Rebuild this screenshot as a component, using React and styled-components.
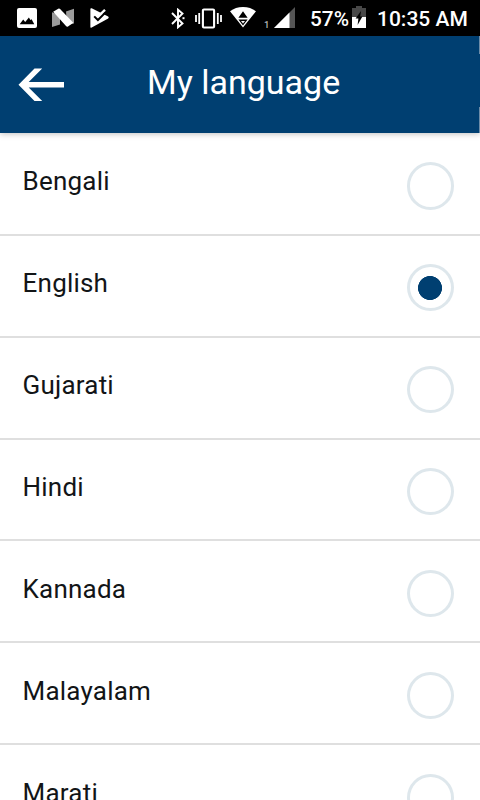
import React, { useState } from "react";
import styled, { createGlobalStyle } from "styled-components";

const languages = ["Bengali", "English", "Gujarati", "Hindi", "Kannada", "Malayalam", "Marati"];

const PictureIcon = () => (
    <Icon width="20" height="20" viewBox="0 0 20 20">
        <rect width="20" height="20" rx="2" fill="#fff" />
        <path d="M2.7 16.2 6.2 11.6 8.2 14 11.9 9.6 13.4 12 14.6 11.3 17.3 16.2Z" fill="#000" />
    </Icon>
);

const NougatIcon = () => (
    <Icon width="22" height="20" viewBox="0 0 22 20" $left={15}>
        <path d="M0 4.2 8 7V16.5L0 19Z" fill="#9b9b9b" />
        <path d="M14 3.6 22 .8V15.6L15 17Z" fill="#9b9b9b" />
        <path d="M1.2 3.8 6.2 .8Q7.4 .3 8.3 1.2L21.3 14.8 16 18.4Q15 19 14.2 18.2Z" fill="#fff" />
    </Icon>
);

const PlayCheckIcon = () => (
    <Icon width="20" height="20" viewBox="0 0 20 20" $left={16}>
        <path d="M.4 1Q.4 0 1.7 .3L18.2 8.6Q19.3 9.5 18.2 10.4L1.7 19.4Q.4 20 .4 19Z" fill="#fff" />
        <path d="M8 8.6 15 1.8" fill="none" stroke="#fff" strokeWidth="2.4" />
        <path d="M4.2 8.4 7.9 12 15.6 4.4" fill="none" stroke="#000" strokeWidth="2" />
    </Icon>
);

const BluetoothIcon = () => (
    <Icon width="14" height="21" viewBox="0 0 14 21">
        <path d="M1 5 11.5 15.5 7 19.3V1.7L11.5 5.5 1 16" fill="none" stroke="#fff" strokeWidth="1.9" />
        <path d="M11.5 9.2H13.5V11.2H11.5Z" fill="#fff" />
    </Icon>
);

const VibrateIcon = () => (
    <Icon width="27" height="21" viewBox="0 0 27 21" $left={10}>
        <rect x="7.9" y="1.5" width="11.2" height="18" rx="1" fill="none" stroke="#fff" strokeWidth="2.1" />
        <path d="M1 7V14M4.2 5V16M22.8 5V16M26 7V14" stroke="#fff" strokeWidth="1.8" />
    </Icon>
);

const WifiIcon = () => (
    <Icon width="26" height="21" viewBox="0 0 26 21" $left={8} $up={1}>
        <path d="M0 4.3Q5.5 0 13 0T26 4.3L13 20.6Z" fill="#fff" />
        <path d="M13 4.2 17.6 10.8H8.4ZM8.4 12.4H17.6L13 18.4Z" fill="#000" />
        <path d="M11 13.9H15L13 16.5Z" fill="#fff" />
    </Icon>
);

const SignalIcon = () => (
    <Icon width="21" height="21" viewBox="0 0 21 21" $left={4} $up={1}>
        <path d="M21 0V21H0Z" fill="#555" />
        <path d="M15.5 5.5V21H0Z" fill="#fff" />
    </Icon>
);

const BatteryIcon = () => (
    <Icon width="14" height="22" viewBox="0 0 14 22" $left={3} $up={1}>
        <path d="M4 0H10V2H14V22H0V2H4Z" fill="#484848" />
        <path d="M0 11H14V22H0Z" fill="#fff" />
        <path d="M9 5 3.6 12.6H6.4L5.6 19 10.4 10.4H8.2Z" fill="#000" />
    </Icon>
);

export default function App() {
    const [selected, setSelected] = useState("English");

    return (
        <Screen>
            <GlobalStyle />
            <StatusBar>
                <Notifications>
                    <PictureIcon />
                    <NougatIcon />
                    <PlayCheckIcon />
                </Notifications>
                <SystemStatus>
                    <BluetoothIcon />
                    <VibrateIcon />
                    <WifiIcon />
                    <SimNumber>1</SimNumber>
                    <SignalIcon />
                    <Percent>57%</Percent>
                    <BatteryIcon />
                    <Clock>10:35 AM</Clock>
                </SystemStatus>
            </StatusBar>
            <Header>
                <BackButton type="button" aria-label="Back">
                    <svg width="47" height="34" viewBox="0 0 47 34">
                        <path d="M16.5 .5H24.2L10.7 14.1H46V19.4H10.7L24.2 33H16.5L.5 16.8Z" fill="#fff" />
                    </svg>
                </BackButton>
                <Title>My language</Title>
                <EdgeMarks />
            </Header>
            <List>
                {languages.map((language) => (
                    <Row key={language}>
                        <Name>{language}</Name>
                        <Radio
                            type="radio"
                            name="language"
                            value={language}
                            aria-label={language}
                            checked={selected === language}
                            onChange={() => setSelected(language)}
                        />
                    </Row>
                ))}
            </List>
        </Screen>
    );
}

// styles
const GlobalStyle = createGlobalStyle`
    * {
        box-sizing: border-box;
    }
    body {
        margin: 0;
        background: #fff;
        font-family: Roboto, "Liberation Sans", sans-serif;
    }
`;
const Screen = styled.main`
    width: 100%;
    height: 100vh;
    display: flex;
    flex-direction: column;
    overflow: hidden;
    background: #fff;
`;
const StatusBar = styled.div`
    flex: none;
    height: 36px;
    padding: 0 12px 0 17px;
    display: flex;
    justify-content: space-between;
    background: #000;
    color: #fff;
`;
const Notifications = styled.div`
    display: flex;
    align-items: center;
`;
const SystemStatus = styled.div`
    display: flex;
    align-items: center;
`;
const Icon = styled.svg`
    display: block;
    flex: none;
    margin-left: ${({ $left }) => $left || 0}px;
    margin-bottom: ${({ $up }) => ($up || 0) * 2}px;
`;
const SimNumber = styled.span`
    width: 6px;
    margin: 13px 0 0 8px;
    font-size: 9.5px;
    font-weight: 500;
    color: #b5b5b5;
`;
const Percent = styled.span`
    width: 39px;
    margin: 1px 0 0 15px;
    font-size: 20.8px;
    font-weight: 500;
    white-space: nowrap;
`;
const Clock = styled.span`
    width: 91px;
    margin: 1px 0 0 11px;
    font-size: 21px;
    font-weight: 500;
    white-space: nowrap;
`;
const Header = styled.header`
    position: relative;
    z-index: 1;
    flex: none;
    height: 97px;
    padding: 0 16px 0 18px;
    display: flex;
    align-items: center;
    background: #003f71;
    box-shadow: 0 1px 6px rgba(0, 0, 0, 0.25);
`;
const BackButton = styled.button`
    flex: none;
    width: 47px;
    height: 34px;
    padding: 0;
    border: 0;
    background: none;
    cursor: pointer;

    svg {
        display: block;
    }
`;
const Title = styled.h1`
    flex: 1;
    margin: 0 60px 6px 0;
    padding-left: 82px;
    color: #fff;
    font-size: 34px;
    line-height: 40px;
    font-weight: 400;
    white-space: nowrap;
`;
const EdgeMarks = styled.div`
    position: absolute;
    top: 0;
    right: 0;
    width: 1px;
    height: 100%;
    background: linear-gradient(#6d8ca8 18px, transparent 18px 71px, #6d8ca8 71px);
`;
const List = styled.section`
    padding-top: 0.9px;
`;
const Row = styled.label`
    height: 101.9px;
    padding: 0 26px 0 22.6px;
    display: flex;
    justify-content: space-between;
    border-bottom: 2px solid #dfdfdf;
    cursor: pointer;
`;
const Name = styled.span`
    padding-top: 32.4px;
    color: #121517;
    font-size: 26px;
    line-height: 30px;
    letter-spacing: 0.2px;
`;
const Radio = styled.input`
    appearance: none;
    flex: none;
    width: 47px;
    height: 47.3px;
    margin: 28.4px 0 0;
    border: 3px solid #dee7ec;
    border-radius: 50%;
    background: #fff;
    cursor: pointer;

    &:checked {
        background: radial-gradient(circle at 20px 21px, #003f71 11.7px, transparent 12.3px);
    }
`;
